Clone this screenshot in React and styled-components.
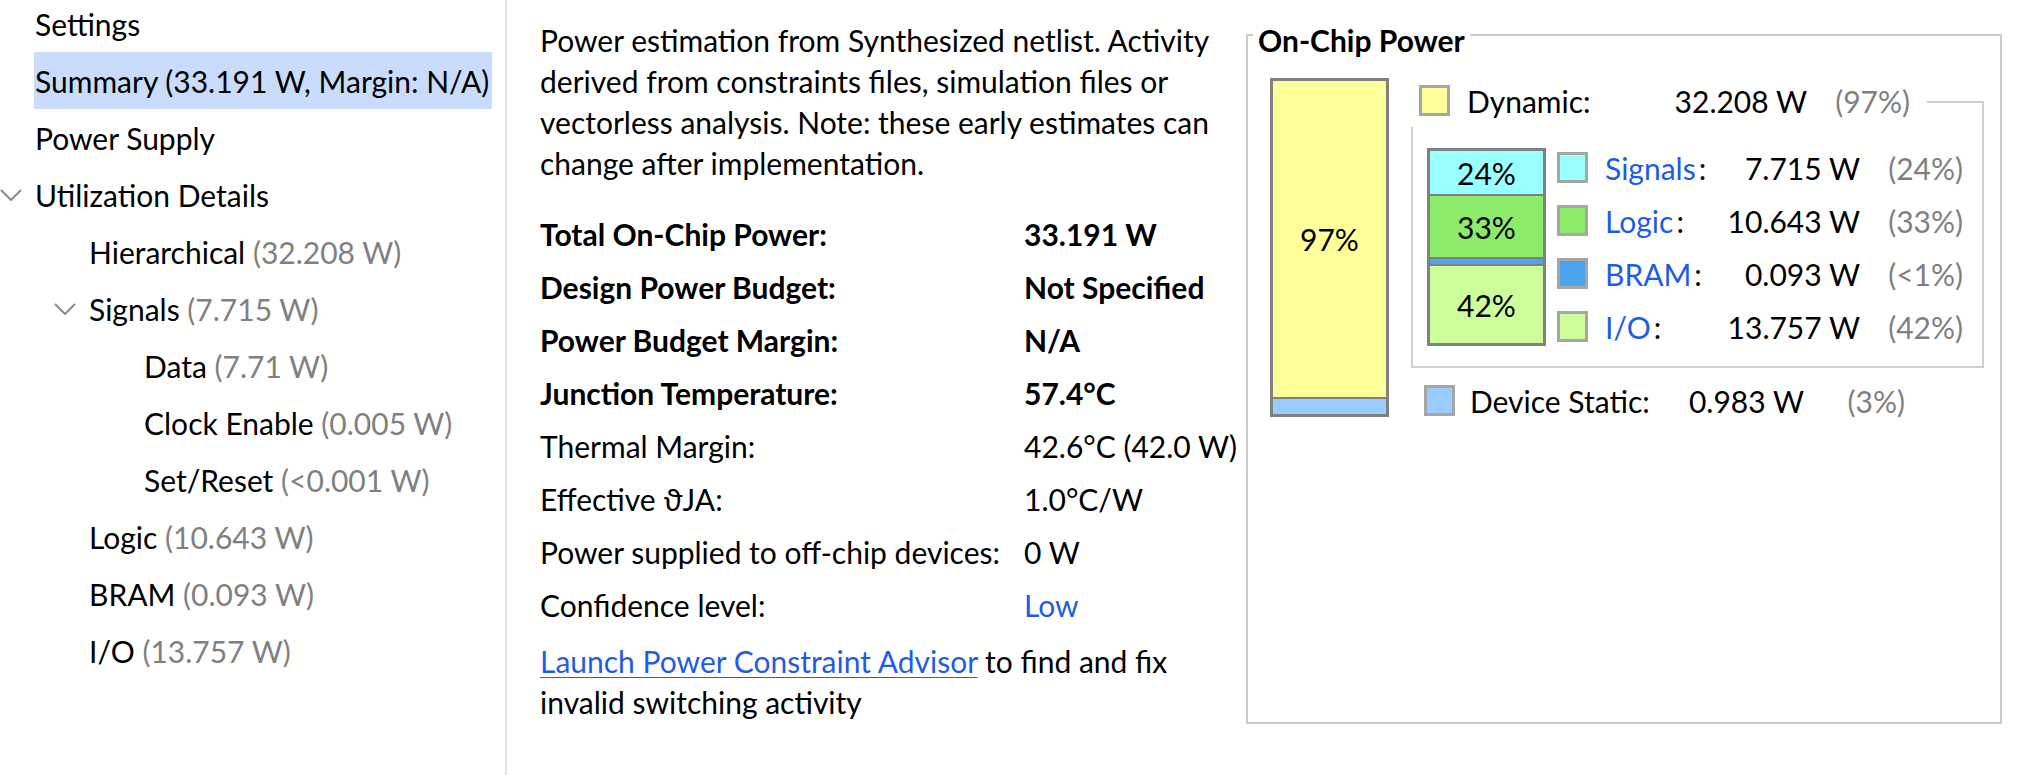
import React from "react";
import styled, { createGlobalStyle } from "styled-components";

const GlobalStyle = createGlobalStyle`
  html, body {
    margin: 0;
    padding: 0;
    background: #fff;
  }
  body {
    font-family: Lato, "Open Sans", "DejaVu Sans", sans-serif;
    color: #000;
  }
`;

const Page = styled.div`
  display: flex;
  align-items: flex-start;
  height: 775px;
  overflow: hidden;
  font-size: 30px;
`;

/* ---------- left tree ---------- */

const Sidebar = styled.nav`
  flex: none;
  width: 505px;
  height: 100%;
  border-right: 2px solid #e4e4e4;
  overflow: hidden;
`;

const Tree = styled.ul`
  list-style: none;
  margin: -5px 0 0;
  padding: 0;
`;

const TreeRow = styled.li`
  display: flex;
  align-items: center;
  height: 57px;
  padding-left: ${({ $indent }) => $indent}px;
`;

const Toggle = styled.span`
  flex: none;
  width: 34px;
  display: flex;
  align-items: center;
`;

const NodeLabel = styled.span`
  display: inline-flex;
  align-items: center;
  height: 100%;
  padding: 0 3px 0 1px;
  white-space: nowrap;
  background: ${({ $selected }) => ($selected ? "#cadcfb" : "transparent")};
`;

const Muted = styled.span`
  color: #808080;
`;

const Chevron = () => (
  <svg width="22" height="12" viewBox="0 0 22 12">
    <polyline
      points="1,1 11,11 21,1"
      fill="none"
      stroke="#8a8a8a"
      strokeWidth="2"
    />
  </svg>
);

const INDENT = [0, 54, 109];

const treeItems = [
  { level: 0, name: "Settings" },
  { level: 0, name: "Summary (33.191 W, Margin: N/A)", selected: true },
  { level: 0, name: "Power Supply" },
  { level: 0, name: "Utilization Details", open: true },
  { level: 1, name: "Hierarchical", value: "(32.208 W)" },
  { level: 1, name: "Signals", value: "(7.715 W)", open: true },
  { level: 2, name: "Data", value: "(7.71 W)" },
  { level: 2, name: "Clock Enable", value: "(0.005 W)" },
  { level: 2, name: "Set/Reset", value: "(<0.001 W)" },
  { level: 1, name: "Logic", value: "(10.643 W)" },
  { level: 1, name: "BRAM", value: "(0.093 W)" },
  { level: 1, name: "I/O", value: "(13.757 W)" },
];

/* ---------- summary text ---------- */

const Main = styled.main`
  flex: none;
  width: 739px;
  box-sizing: border-box;
  padding: 20px 0 0 33px;
`;

const Intro = styled.p`
  margin: 0;
  line-height: 41px;
`;

const Stats = styled.div`
  display: grid;
  grid-template-columns: 484px auto;
  grid-auto-rows: 53px;
  align-items: center;
  margin-top: 23px;
  white-space: nowrap;
`;

const StatCell = styled.div`
  font-weight: ${({ $bold }) => ($bold ? 700 : 400)};
`;

const Advice = styled.p`
  margin: 10px 0 0;
  line-height: 41px;
`;

const Link = styled.a`
  color: #1f5ce6;
  text-decoration: ${({ $underline }) => ($underline ? "underline" : "none")};
  text-underline-offset: 4px;
  text-decoration-thickness: 1px;
  cursor: pointer;
`;

const stats = [
  ["Total On-Chip Power:", "33.191 W", true],
  ["Design Power Budget:", "Not Specified", true],
  ["Power Budget Margin:", "N/A", true],
  ["Junction Temperature:", "57.4°C", true],
  ["Thermal Margin:", "42.6°C (42.0 W)"],
  ["Effective \u03D1JA:", "1.0°C/W"],
  ["Power supplied to off-chip devices:", "0 W"],
  ["Confidence level:", <Link key="low">Low</Link>],
];

/* ---------- on-chip power panel ---------- */

const ChipPanel = styled.section`
  position: relative;
  flex: none;
  margin-top: 34px;
  width: 756px;
  height: 690px;
  box-sizing: border-box;
  border: 2px solid #cbcbcb;
  padding: 42px 16px 0 22px;
  display: flex;
  align-items: flex-start;
  gap: 22px;
`;

const PanelTitle = styled.h2`
  position: absolute;
  top: -16px;
  left: 5px;
  margin: 0;
  padding: 0 5px;
  background: #fff;
  font-size: 30px;
  font-weight: 700;
  line-height: 40px;
`;

const StackBar = styled.div`
  flex: none;
  width: 119px;
  box-sizing: border-box;
  border: 3px solid #808080;
  display: flex;
  flex-direction: column;
`;

const Segment = styled.div`
  height: ${({ $h }) => $h}px;
  background: ${({ $color }) => $color};
  display: flex;
  align-items: center;
  justify-content: center;
  & + & {
    border-top: 2px solid #808080;
  }
`;

const RightCol = styled.div`
  flex: none;
  width: 573px;
  display: flex;
  flex-direction: column;
`;

const DynamicGroup = styled.div`
  position: relative;
  margin-top: 23px;
  border: 2px solid #d0d0d0;
  padding: 38px 19px 13px 14px;
  display: flex;
  align-items: center;
  gap: 11px;
`;

const GroupLegend = styled.div`
  position: absolute;
  top: -23px;
  left: -2px;
  width: 516px;
  height: 47px;
  box-sizing: border-box;
  padding: 0 17px 6px 8px;
  background: #fff;
  display: flex;
  align-items: center;
`;

const Breakdown = styled.div`
  flex: 1;
  display: flex;
  flex-direction: column;
`;

const LegendRow = styled.div`
  flex: none;
  display: flex;
  align-items: center;
  height: ${({ $h }) => $h || 53}px;
  width: ${({ $w }) => ($w ? `${$w}px` : "100%")};
  margin-left: ${({ $ml }) => $ml || 0}px;
  margin-top: ${({ $mt }) => $mt || 0}px;
  white-space: nowrap;
`;

const Swatch = styled.span`
  flex: none;
  width: 31px;
  height: 31px;
  box-sizing: border-box;
  border: 3px solid #a6a6a6;
  background: ${({ $color }) => $color};
  margin-right: ${({ $gap }) => $gap || 17}px;
`;

const LegendName = styled.span`
  flex: 1;
`;

const Colon = styled.span`
  margin-left: 3px;
`;

const LegendValue = styled.span`
  text-align: right;
`;

const LegendPct = styled.span`
  flex: none;
  width: ${({ $w }) => $w || 103}px;
  text-align: right;
  color: #808080;
`;

const COLORS = {
  dynamic: "#ffff99",
  static: "#99ccff",
  signals: "#99ffff",
  logic: "#8cec6a",
  bram: "#4ca4ee",
  io: "#ccff99",
};

const breakdown = [
  { name: "Signals", value: "7.715 W", pct: "(24%)", color: COLORS.signals },
  { name: "Logic", value: "10.643 W", pct: "(33%)", color: COLORS.logic },
  { name: "BRAM", value: "0.093 W", pct: "(<1%)", color: COLORS.bram },
  { name: "I/O", value: "13.757 W", pct: "(42%)", color: COLORS.io },
];

export default function App() {
  return (
    <>
      <GlobalStyle />
      <Page>
        <Sidebar>
          <Tree>
            {treeItems.map((item) => (
              <TreeRow key={item.name} $indent={INDENT[item.level]}>
                <Toggle>{item.open && <Chevron />}</Toggle>
                <NodeLabel $selected={item.selected}>
                  {item.name}
                  {item.value && <Muted>&nbsp;{item.value}</Muted>}
                </NodeLabel>
              </TreeRow>
            ))}
          </Tree>
        </Sidebar>

        <Main>
          <Intro>
            Power estimation from Synthesized netlist. Activity
            <br />
            derived from constraints files, simulation files or
            <br />
            vectorless analysis. Note: these early estimates can
            <br />
            change after implementation.
          </Intro>
          <Stats>
            {stats.map(([label, value, bold]) => (
              <React.Fragment key={label}>
                <StatCell $bold={bold}>{label}</StatCell>
                <StatCell $bold={bold}>{value}</StatCell>
              </React.Fragment>
            ))}
          </Stats>
          <Advice>
            <Link $underline>Launch Power Constraint Advisor</Link> to find and fix
            <br />
            invalid switching activity
          </Advice>
        </Main>

        <ChipPanel>
          <PanelTitle>On-Chip Power</PanelTitle>
          <StackBar>
            <Segment $h={316} $color={COLORS.dynamic}>97%</Segment>
            <Segment $h={15} $color={COLORS.static} />
          </StackBar>

          <RightCol>
            <DynamicGroup>
              <GroupLegend>
                <LegendRow $h={41}>
                  <Swatch $color={COLORS.dynamic} />
                  <LegendName>Dynamic:</LegendName>
                  <LegendValue>32.208 W</LegendValue>
                  <LegendPct>(97%)</LegendPct>
                </LegendRow>
              </GroupLegend>

              <StackBar>
                <Segment $h={43} $color={COLORS.signals}>24%</Segment>
                <Segment $h={61} $color={COLORS.logic}>33%</Segment>
                <Segment $h={5} $color={COLORS.bram} />
                <Segment $h={77} $color={COLORS.io}>42%</Segment>
              </StackBar>

              <Breakdown>
                {breakdown.map((b) => (
                  <LegendRow key={b.name}>
                    <Swatch $color={b.color} />
                    <LegendName>
                      <Link>{b.name}</Link>
                      <Colon>:</Colon>
                    </LegendName>
                    <LegendValue>{b.value}</LegendValue>
                    <LegendPct>{b.pct}</LegendPct>
                  </LegendRow>
                ))}
              </Breakdown>
            </DynamicGroup>

            <LegendRow $w={481} $ml={13} $mt={6}>
              <Swatch $color={COLORS.static} $gap={15} />
              <LegendName>Device Static:</LegendName>
              <LegendValue>0.983 W</LegendValue>
              <LegendPct $w={101}>(3%)</LegendPct>
            </LegendRow>
          </RightCol>
        </ChipPanel>
      </Page>
    </>
  );
}
